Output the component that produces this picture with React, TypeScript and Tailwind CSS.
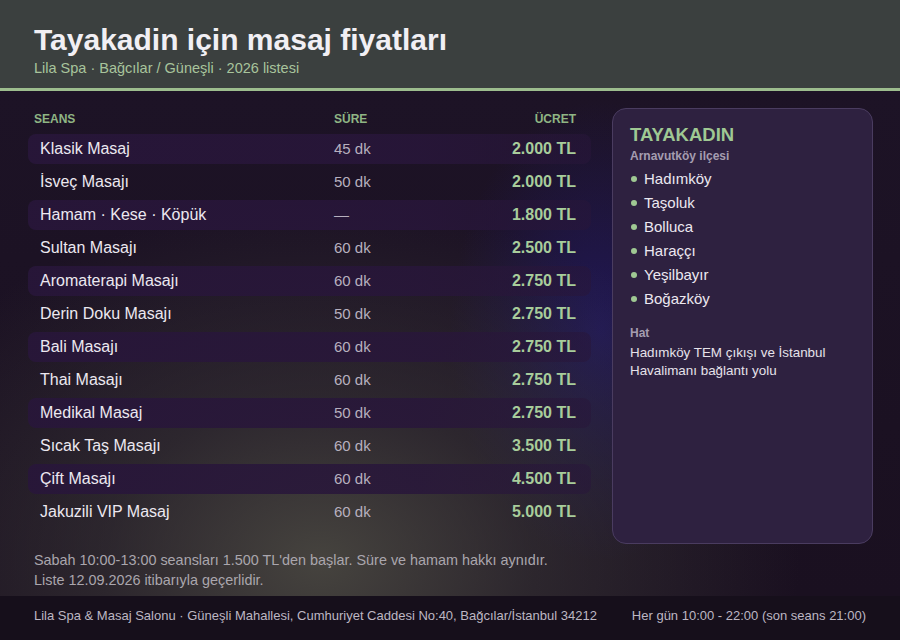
import React from "react";

const rows = [
  { name: "Klasik Masaj", dur: "45 dk", price: "2.000 TL" },
  { name: "İsveç Masajı", dur: "50 dk", price: "2.000 TL" },
  { name: "Hamam · Kese · Köpük", dur: "—", price: "1.800 TL" },
  { name: "Sultan Masajı", dur: "60 dk", price: "2.500 TL" },
  { name: "Aromaterapi Masajı", dur: "60 dk", price: "2.750 TL" },
  { name: "Derin Doku Masajı", dur: "50 dk", price: "2.750 TL" },
  { name: "Bali Masajı", dur: "60 dk", price: "2.750 TL" },
  { name: "Thai Masajı", dur: "60 dk", price: "2.750 TL" },
  { name: "Medikal Masaj", dur: "50 dk", price: "2.750 TL" },
  { name: "Sıcak Taş Masajı", dur: "60 dk", price: "3.500 TL" },
  { name: "Çift Masajı", dur: "60 dk", price: "4.500 TL" },
  { name: "Jakuzili VIP Masaj", dur: "60 dk", price: "5.000 TL" },
];

const areas = ["Hadımköy", "Taşoluk", "Bolluca", "Haraççı", "Yeşilbayır", "Boğazköy"];

export default function App() {
  return (
    <div className="w-[900px] h-[640px] flex flex-col overflow-hidden font-['Liberation_Sans',Arial,sans-serif] bg-[#1a1020]">
      <header className="h-[91px] shrink-0 bg-[#3b403f] border-b-[3px] border-[#9dbd8e] px-[34px] pt-[22px]">
        <h1 className="text-[30px] leading-[36px] font-bold text-[#f1eff4]">Tayakadin için masaj fiyatları</h1>
        <p className="text-[14.5px] leading-[20px] text-[#a8c49c]">Lila Spa · Bağcılar / Güneşli · 2026 listesi</p>
      </header>

      <main className="flex-1 flex flex-col px-[28px] pt-[17px] bg-[radial-gradient(ellipse_480px_360px_at_320px_470px,rgba(72,70,64,0.95),rgba(62,60,58,0.5)_45%,transparent),radial-gradient(ellipse_150px_230px_at_600px_240px,rgba(36,28,120,0.6),transparent),linear-gradient(#1d1326,#1a1020)]">
        <div className="flex gap-[21px] items-start">
          <div className="w-[563px] shrink-0">
            <div className="grid grid-cols-[306px_1fr_auto] h-[21px] items-center pr-[15px] mb-[5px] text-[12px] font-bold text-[#8fb584]">
              <span className="pl-[6px]">SEANS</span>
              <span>SÜRE</span>
              <span className="text-right">ÜCRET</span>
            </div>
            <div className="flex flex-col gap-[3px]">
              {rows.map((r, i) => (
                <div
                  key={r.name}
                  className={
                    "grid grid-cols-[306px_1fr_auto] h-[30px] items-center pr-[15px] rounded-[8px] " +
                    (i % 2 === 0
                      ? "bg-[linear-gradient(90deg,rgba(40,22,58,0.9),rgba(40,22,58,0.85)_70%,rgba(40,22,58,0.55))]"
                      : "")
                  }
                >
                  <span className="pl-[12px] text-[16px] text-[#ece8f0]">{r.name}</span>
                  <span className="text-[15px] text-[#b7b0bf]">{r.dur}</span>
                  <span className="text-right text-[16px] font-bold text-[#a8cd9b]">{r.price}</span>
                </div>
              ))}
            </div>
            <div className="mt-[23px] pl-[6px] text-[14.4px] leading-[20px] text-[#aaa6ad]">
              <p>Sabah 10:00-13:00 seansları 1.500 TL'den başlar. Süre ve hamam hakkı aynıdır.</p>
              <p>Liste 12.09.2026 itibarıyla geçerlidir.</p>
            </div>
          </div>

          <aside className="w-[261px] h-[436px] shrink-0 rounded-[14px] border border-[#4a3c60] bg-[#2e2140] px-[17px] pt-[16px]">
            <h2 className="text-[18.5px] leading-[20px] font-bold text-[#9fc893]">TAYAKADIN</h2>
            <p className="text-[12px] leading-[16px] font-bold text-[#a59db0] mt-[3px]">Arnavutköy ilçesi</p>
            <ul className="mt-[3px]">
              {areas.map((a) => (
                <li key={a} className="flex items-center gap-[7px] h-[24px] text-[15px] text-[#ece8f0]">
                  <span className="w-[6px] h-[6px] rounded-full bg-[#9fc893] ml-[1px]" />
                  {a}
                </li>
              ))}
            </ul>
            <p className="mt-[14px] text-[12px] leading-[16px] font-bold text-[#a59db0]">Hat</p>
            <p className="mt-[3px] text-[13.4px] leading-[18px] text-[#e6e2ea]">
              Hadımköy TEM çıkışı ve İstanbul Havalimanı bağlantı yolu
            </p>
          </aside>
        </div>
      </main>

      <footer className="h-[44px] shrink-0 bg-[#160f1b] px-[34px] flex items-center justify-between text-[13px] text-[#bdb7c3] pb-[4px]">
        <span>Lila Spa &amp; Masaj Salonu · Güneşli Mahallesi, Cumhuriyet Caddesi No:40, Bağcılar/İstanbul 34212</span>
        <span>Her gün 10:00 - 22:00 (son seans 21:00)</span>
      </footer>
    </div>
  );
}
